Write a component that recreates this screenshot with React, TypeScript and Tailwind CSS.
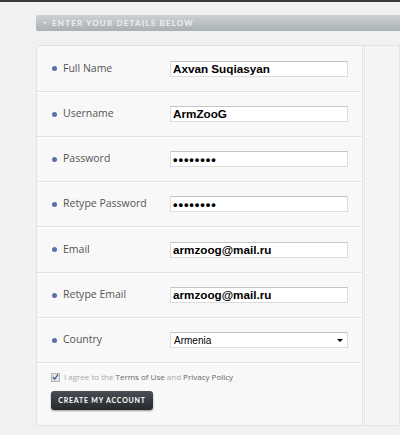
import React from 'react';

const fields = [
  { label: 'Full Name', value: 'Axvan Suqiasyan', h: 'h-[46px]' },
  { label: 'Username', value: 'ArmZooG', h: 'h-[45px]' },
  { label: 'Password', value: '••••••••', password: true, h: 'h-[45px]' },
  { label: 'Retype Password', value: '••••••••', password: true, h: 'h-[45px]' },
  { label: 'Email', value: 'armzoog@mail.ru', h: 'h-[46px]' },
  { label: 'Retype Email', value: 'armzoog@mail.ru', h: 'h-[45px]' },
];

function Row({ label, h, children }: { label: string; h: string; children: React.ReactNode }) {
  return (
    <div className={`${h} flex items-center pl-[15px] border-b border-[#e3e3e3] shadow-[0_1px_0_#ffffff]`}>
      <div className="w-[118px] flex items-center">
        <span className="w-[5px] h-[5px] rounded-full bg-[#5a6ea8]" />
        <span className="ml-[6px] text-[10.5px] text-[#555] font-['Open_Sans',sans-serif]">{label}</span>
      </div>
      {children}
    </div>
  );
}

export default function App() {
  return (
    <div className="w-[400px] h-[435px] bg-[#f1f1f1] border-t-2 border-[#3a3a3a] overflow-hidden">
      <div className="pl-[36px] pt-[13px]">
        {/* Section header */}
        <div className="h-[16px] rounded-l-[2px] bg-gradient-to-b from-[#ccd1d4] to-[#a9b0b4] flex items-center pl-[7px]">
          <span className="w-0 h-0 border-l-[2px] border-r-[2px] border-t-[2px] border-l-transparent border-r-transparent border-t-white/80" />
          <span className="ml-[5px] text-[8px] tracking-[1.2px] text-[#eef0f1] font-['Lato',sans-serif] font-bold uppercase">
            Enter your details below
          </span>
        </div>

        {/* Form card */}
        <div className="mt-[14px] h-[381px] flex bg-[#f8f8f8] border border-[#e2e2e2] rounded-tl-[3px]">
          <div className="w-[328px] border-r-[3px] border-double border-[#e4e4e4]">
            {fields.map((f) => (
              <Row key={f.label} label={f.label} h={f.h}>
                <div className="w-[178px] h-[16px] bg-white border border-[#dcdcdc] border-t-[#c4c4c4] flex items-center pl-[2px]">
                  <span
                    className={`font-['Liberation_Sans',Arial,sans-serif] font-bold text-black ${
                      f.password ? 'text-[13px] tracking-[0.9px] leading-none' : 'text-[11.7px]'
                    }`}
                  >
                    {f.value}
                  </span>
                </div>
              </Row>
            ))}
            <Row label="Country" h="h-[45px]">
              <div className="w-[178px] h-[16px] bg-white border border-[#dcdcdc] border-t-[#c4c4c4] flex items-center justify-between pl-[3px] pr-[4px]">
                <span className="text-[10px] text-black font-['Liberation_Sans',Arial,sans-serif]">Armenia</span>
                <span className="w-0 h-0 border-l-[3px] border-r-[3px] border-t-[3px] border-l-transparent border-r-transparent border-t-black" />
              </div>
            </Row>

            <div className="pl-[14px] pt-[8px]">
              <div className="flex items-center">
                <span className="w-[9px] h-[9px] border border-[#b5b5b5] bg-[#e4e4e4] flex items-center justify-center">
                  <svg width="8" height="8" viewBox="0 0 8 8">
                    <path d="M1 4 L3 6.5 L7 1" stroke="#3d5a9a" strokeWidth="1.4" fill="none" />
                  </svg>
                </span>
                <span className="ml-[4px] text-[8px] text-[#a8a8a8] font-['Open_Sans',sans-serif]">
                  I agree to the <span className="text-[#666]">Terms of Use</span> and{' '}
                  <span className="text-[#666]">Privacy Policy</span>
                </span>
              </div>
              <button className="mt-[8px] w-[102px] h-[19px] rounded-[3px] bg-gradient-to-b from-[#4a4f55] to-[#24282d] shadow-[0_1px_2px_rgba(0,0,0,0.4)] flex items-center justify-center">
                <span className="text-[7px] font-bold tracking-[0.8px] text-white font-['Lato',sans-serif]">
                  CREATE MY ACCOUNT
                </span>
              </button>
            </div>
          </div>
          <div className="flex-1 bg-[#f4f4f4]" />
        </div>
      </div>
    </div>
  );
}
